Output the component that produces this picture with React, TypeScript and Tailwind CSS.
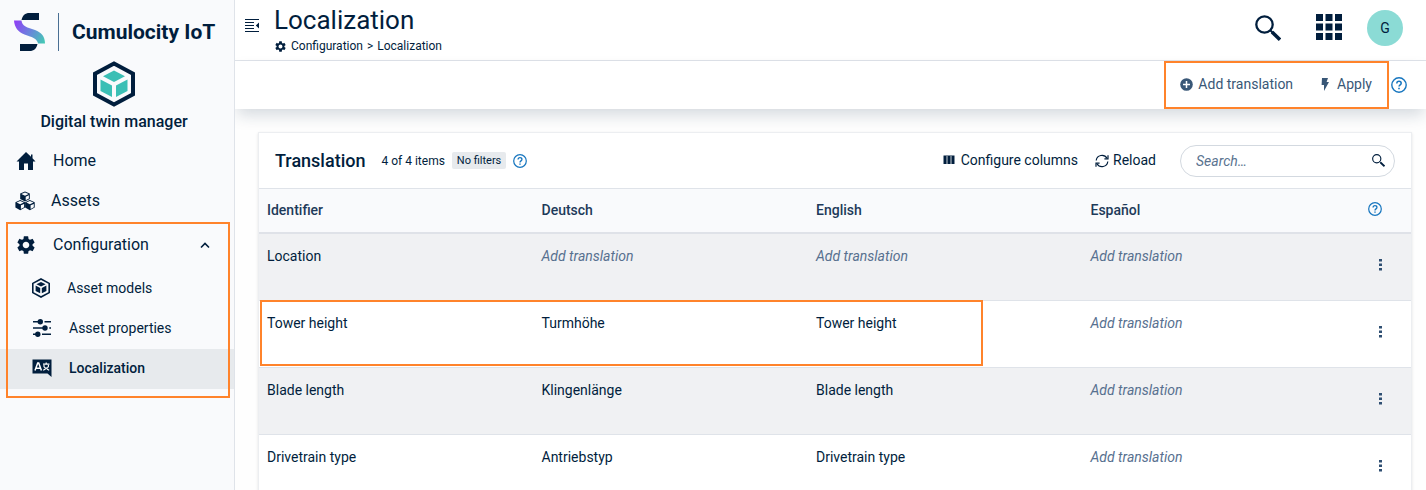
import React from "react";
import { MdSettings } from "react-icons/md";

type IconProps = { className?: string };

function BrandMark() {
  return (
    <svg viewBox="0 0 31 38" className="h-[38px] w-[31px] shrink-0" aria-hidden="true">
      <defs>
        <linearGradient id="brand-ribbon" x1="0" y1="10" x2="31" y2="28" gradientUnits="userSpaceOnUse">
          <stop offset="0" stopColor="#8f3ff5" />
          <stop offset="0.5" stopColor="#6a83dc" />
          <stop offset="1" stopColor="#45c9b5" />
        </linearGradient>
      </defs>
      <path d="M7.500 7C8.500 2.500 11 0 15.500 0H25V7Z" fill="#011e3d" />
      <path d="M23.500 31C22.500 35.500 20 38 15.500 38H6V31Z" fill="#011e3d" />
      <path
        d="M0 7.500H7.500C8 11.500 10.500 13.500 15 15L21 17C27.500 19.500 31 23.500 31 30.500H24C23.500 27 20.500 25 16 23.500L10.500 21.500C4 19 .5 14.500 0 7.500Z"
        fill="url(#brand-ribbon)"
      />
    </svg>
  );
}

function TwinLogo() {
  return (
    <svg viewBox="0 0 44 46" className="h-[46px] w-11" aria-hidden="true">
      <path d="M22 2.500 41 12.800V33.200L22 43.500 3 33.200V12.800Z" fill="none" stroke="#011e3d" strokeWidth="4" />
      <path d="M22 9.500 33 15.200 22 21 11 15.200Z" fill="#3bbfb5" />
      <path d="M8.500 18.500 20 24.500V36L8.500 30Z" fill="#3bbfb5" />
      <path d="M35.500 18.500 24 24.500V36L35.500 30Z" fill="#3bbfb5" />
    </svg>
  );
}

function HomeIcon({ className }: IconProps) {
  return (
    <svg viewBox="0 0 20 20" className={className} fill="currentColor" aria-hidden="true">
      <path d="M10 1 .5 10.500H3V19h5v-6.500h4V19h5v-8.500h2.500L16.500 7.300V3.500H15v2.300Z" />
    </svg>
  );
}

function CubesIcon({ className }: IconProps) {
  const cube = (x: number, y: number) => (
    <g transform={`translate(${x} ${y})`}>
      <path d="M5 0 9.800 2.200V7.600L5 10.200.2 7.600V2.200Z" fill="currentColor" />
      <path d="M5 1 8.600 2.600 5 4.300 1.400 2.600Z" fill="#f9fafc" />
      <path d="M5.700 5.300 8.900 3.900V7.200L5.700 8.900Z" fill="#f9fafc" />
    </g>
  );
  return (
    <svg viewBox="0 0 20 20" className={className} aria-hidden="true">
      {cube(5, 0.4)}
      {cube(0.2, 9)}
      {cube(9.9, 9)}
    </svg>
  );
}

function HexCubeIcon({ className }: IconProps) {
  return (
    <svg viewBox="0 0 20 20" className={className} aria-hidden="true">
      <path d="M10 1 18.200 5.400V14.600L10 19 1.800 14.600V5.400Z" fill="none" stroke="currentColor" strokeWidth="1.600" />
      <path d="M10 4 14.600 6.300 10 8.600 5.400 6.300Z" fill="currentColor" />
      <path d="M4.600 7.600 9.200 10V15.200L4.600 12.900Z" fill="currentColor" />
      <path d="M15.400 7.600 10.800 10V15.200L15.400 12.900Z" fill="currentColor" />
    </svg>
  );
}

function SlidersIcon({ className }: IconProps) {
  return (
    <svg viewBox="0 0 20 20" className={className} fill="currentColor" aria-hidden="true">
      <path d="M1 3h9v1.500H1zM12.500 3H19v1.500h-6.500zM1 9.300h13v1.500H1zM17.300 9.300H19v1.500h-1.700zM1 15.600h5v1.500H1zM10 15.600h9v1.500h-9z" />
      <circle cx="8.300" cy="3.700" r="2.700" />
      <circle cx="13" cy="10" r="2.700" />
      <circle cx="5.800" cy="16.300" r="2.700" />
    </svg>
  );
}

function LanguageIcon({ className }: IconProps) {
  return (
    <svg viewBox="0 0 20 20" className={className} aria-hidden="true">
      <path d="M.5 1.500h19V19l-4-3.500H.5Z" fill="currentColor" />
      <path d="M3 12.500 5.700 5h1l2.700 7.500M4 10.200h4.400" fill="none" stroke="#fff" strokeWidth="1.500" />
      <path d="M11 6.200h6.500M14.200 4.500v1.700M12 7c-.3 2 .5 3 2.200 3s2.500-1 2.200-3M14.200 9.500c-.6 1.500-1.500 2.300-3 2.800M14.200 9.500c.6 1.500 1.500 2.300 3 2.800" fill="none" stroke="#fff" strokeWidth="1.200" />
    </svg>
  );
}

function CollapseIcon({ className }: IconProps) {
  return (
    <svg viewBox="0 0 14 14" className={className} fill="currentColor" aria-hidden="true">
      <path d="M0 0h14v1H0zM0 3h9v1H0zM0 6h9v1H0zM0 9h9v1H0zM0 12h14v1H0zM14 3.600v6L10.800 6.600z" />
    </svg>
  );
}

function SearchIcon({ className }: IconProps) {
  return (
    <svg viewBox="0 0 26 26" className={className} fill="none" stroke="currentColor" aria-hidden="true">
      <circle cx="9.500" cy="9.500" r="8.200" strokeWidth="2.300" />
      <path d="m15 15 2.500 2.500" strokeWidth="2" />
      <path d="m17 17 8 7.700" strokeWidth="3.600" />
    </svg>
  );
}

function GridIcon({ className }: IconProps) {
  return (
    <svg viewBox="0 0 26 26" className={className} fill="currentColor" aria-hidden="true">
      <path d="M0 0h7v7H0zM9.500 0h7v7h-7zM19 0h7v7h-7zM0 9.500h7v7H0zM9.500 9.500h7v7h-7zM19 9.500h7v7h-7zM0 19h7v7H0zM9.500 19h7v7h-7zM19 19h7v7h-7z" />
    </svg>
  );
}

function HelpIcon({ className }: IconProps) {
  return (
    <svg viewBox="0 0 16 16" className={className} fill="none" stroke="currentColor" aria-hidden="true">
      <circle cx="8" cy="8" r="7.200" strokeWidth="1.400" />
      <path d="M5.800 6.400c0-1.300 1-2.200 2.200-2.200s2.200.8 2.200 2c0 1.600-2.200 1.700-2.200 3.400" strokeWidth="1.500" />
      <path d="M8 10.800v1.500" strokeWidth="1.600" />
    </svg>
  );
}

function PlusCircleIcon({ className }: IconProps) {
  return (
    <svg viewBox="0 0 13 13" className={className} aria-hidden="true">
      <circle cx="6.500" cy="6.500" r="6.300" fill="currentColor" />
      <path d="M6.500 3v7M3 6.500h7" stroke="#fff" strokeWidth="1.500" />
    </svg>
  );
}

function BoltIcon({ className }: IconProps) {
  return (
    <svg viewBox="0 0 8 13" className={className} fill="currentColor" aria-hidden="true">
      <path d="M1 0h6L5.600 4H8L3 13V7H.6Z" />
    </svg>
  );
}

function ColumnsIcon({ className }: IconProps) {
  return (
    <svg viewBox="0 0 12 10" className={className} aria-hidden="true">
      <path d="M.5.500h11v8.500H.5z" fill="currentColor" />
      <path d="M4 1v8M8 1v8" stroke="#fff" strokeWidth=".8" />
    </svg>
  );
}

function ReloadIcon({ className }: IconProps) {
  return (
    <svg viewBox="0 0 14 14" className={className} fill="none" stroke="currentColor" strokeWidth="1.200" aria-hidden="true">
      <path d="M1.200 6.500A5.800 5.800 0 0 1 12 4.300M12.800 7.500A5.800 5.800 0 0 1 2 9.700" />
      <path d="M13 1.200v3.600H9.400M1 12.800V9.200h3.600" />
    </svg>
  );
}

function DotsIcon({ className }: IconProps) {
  return (
    <svg viewBox="0 0 3 12" className={className} fill="currentColor" aria-hidden="true">
      <path d="M0 0h3v2.500H0zM0 4.500h3V7H0zM0 9h3v2.500H0z" />
    </svg>
  );
}

const columns = ["Identifier", "Deutsch", "English", "Español"];

const rows: string[][] = [
  ["Location", "", "", ""],
  ["Tower height", "Turmhöhe", "Tower height", ""],
  ["Blade length", "Klingenlänge", "Blade length", ""],
  ["Drivetrain type", "Antriebstyp", "Drivetrain type", ""],
];

function Sidebar() {
  return (
    <aside className="w-[235px] shrink-0 border-r border-[#dfe3e9] bg-[#f9fafc] pt-[13px]">
      <div className="flex items-center pl-3.5">
        <BrandMark />
        <div className="ml-[13px] h-[38px] w-px bg-[#4a6f93]" />
        <span className="ml-[13px] text-[21px] leading-6 font-bold whitespace-nowrap">Cumulocity IoT</span>
      </div>
      <div className="mt-[10px] flex flex-col items-center pr-1.5">
        <TwinLogo />
        <span className="mt-[3px] text-[16px] leading-6 font-medium">Digital twin manager</span>
      </div>
      <nav aria-label="Main" className="mt-[7px]">
        <a href="#home" className="flex h-10 items-center gap-[17px] pl-4 text-[16px]">
          <HomeIcon className="size-5" />
          Home
        </a>
        <a href="#assets" className="flex h-10 items-center gap-4 pl-[15px] text-[16px]">
          <CubesIcon className="size-5" />
          Assets
        </a>
        <div className="relative">
          <button type="button" aria-expanded="true" className="flex h-12 w-full items-center gap-4 pr-6 pl-[15px] text-left text-[16px]">
            <MdSettings className="size-[22px]" />
            <span className="flex-1">Configuration</span>
            <svg viewBox="0 0 10 10" className="size-2.5" fill="none" stroke="currentColor" strokeWidth="1.600" aria-hidden="true">
              <path d="m1 7.500 4-4 4 4" />
            </svg>
          </button>
          <a href="#models" className="flex h-10 items-center gap-4 pb-0.5 pl-[31px] text-[14px]">
            <HexCubeIcon className="size-5" />
            Asset models
          </a>
          <a href="#properties" className="flex h-10 items-center gap-[17px] pb-0.5 pl-8 text-[14px]">
            <SlidersIcon className="size-5" />
            Asset properties
          </a>
          <a href="#localization" aria-current="page" className="flex h-10 items-center gap-[17px] bg-[#e7eaed] pb-0.5 pl-8 text-[14px] font-medium">
            <LanguageIcon className="size-5" />
            Localization
          </a>
          <div className="pointer-events-none absolute top-px right-1 -bottom-[9px] left-1.5 border-2 border-[#ff832b]" />
        </div>
      </nav>
    </aside>
  );
}

function TopBar() {
  return (
    <header className="flex h-[61px] shrink-0 items-center border-b border-[#dfe3e9] bg-white pr-[23px] pl-[10px]">
      <button type="button" aria-label="Collapse navigation" className="-mt-2">
        <CollapseIcon className="size-3.5" />
      </button>
      <div className="ml-[15px] flex-1">
        <h1 className="-mt-0.5 text-[26px] leading-8">Localization</h1>
        <nav aria-label="Breadcrumb" className="mt-0.5 flex items-center text-[12px] leading-4">
          <MdSettings className="mr-1 size-[13px]" />
          <a href="#configuration">Configuration</a>
          <span className="px-1">&gt;</span>
          <a href="#localization">Localization</a>
        </nav>
      </div>
      <button type="button" aria-label="Search" className="mr-[35px] mb-1">
        <SearchIcon className="size-[26px]" />
      </button>
      <button type="button" aria-label="Applications" className="mr-[25px] mb-1.5">
        <GridIcon className="size-[26px]" />
      </button>
      <button type="button" className="mb-1 size-9 rounded-full bg-[#8bdbd5] text-[14px]">
        G
      </button>
    </header>
  );
}

function ActionBar() {
  return (
    <div className="relative z-10 flex h-12 shrink-0 items-center justify-end bg-white pr-[19px] text-[#395777] shadow-[0_8px_16px_-2px_rgba(20,50,80,0.18)]">
      <div className="relative flex h-full items-center gap-7 pr-[17px] pb-0.5 pl-4 text-[14px]">
        <button type="button" className="flex items-center gap-[5px]">
          <PlusCircleIcon className="size-[13px]" />
          Add translation
        </button>
        <button type="button" className="flex items-center gap-2">
          <BoltIcon className="h-[13px] w-2" />
          Apply
        </button>
        <div className="pointer-events-none absolute inset-0 border-2 border-[#ff832b]" />
      </div>
      <button type="button" aria-label="Help" className="ml-[2px] text-[#1776bf]">
        <HelpIcon className="size-4" />
      </button>
    </div>
  );
}

function TranslationCard() {
  return (
    <section className="mt-[23px] mr-3.5 ml-[23px] border border-[#eceef1] bg-white shadow-sm">
      <div className="flex h-14 items-center border-b border-[#dfe3e9] px-4 text-[14px]">
        <h2 className="text-[18px] font-medium">Translation</h2>
        <span className="ml-4 text-[12px]">4 of 4 items</span>
        <span className="ml-[7px] rounded-xs bg-[#e7eaed] px-[5px] text-[11px] leading-[17px]">No filters</span>
        <button type="button" aria-label="Help" className="ml-[7px] text-[#1776bf]">
          <HelpIcon className="size-3.5" />
        </button>
        <button type="button" className="ml-auto flex items-center gap-1.5">
          <ColumnsIcon className="mb-0.5 h-2.5 w-3" />
          Configure columns
        </button>
        <button type="button" className="ml-[17px] flex items-center gap-1">
          <ReloadIcon className="size-3.5" />
          Reload
        </button>
        <label className="ml-6 flex h-8 w-[215px] items-center rounded-full border border-[#d3d9e0] pr-[9px] pl-[15px]">
          <span className="hidden">Search translations</span>
          <input
            type="text"
            aria-label="Search translations"
            placeholder="Search…"
            className="h-full min-w-0 flex-1 bg-transparent leading-6 italic outline-none placeholder:text-[#5a7390]"
          />
          <SearchIcon className="size-[13px] shrink-0" />
        </label>
      </div>
      <div className="relative">
        <table className="w-full table-fixed border-separate border-spacing-0 text-left text-[14px]">
          <thead className="bg-[#f9fafc] text-[#1e3a5a]">
            <tr>
              {columns.map((c) => (
                <th key={c} scope="col" className="h-[45px] border-b-2 border-[#dfe2e8] px-2 font-medium">
                  {c}
                </th>
              ))}
              <th scope="col" className="w-[54px] border-b-2 border-[#dfe2e8] pb-1 pl-[11px] align-middle">
                <button type="button" aria-label="Help" className="block text-[#1776bf]">
                  <HelpIcon className="size-3.5" />
                </button>
              </th>
            </tr>
          </thead>
          <tbody>
            {rows.map((row) => (
              <tr key={row[0]} className="odd:bg-[#f0f1f3]">
                {row.map((cell, i) => (
                  <td key={i} className="h-[67px] border-b border-[#dfe3e9] px-2 pt-3 align-top leading-5">
                    {cell || <span className="text-[#57708f] italic">Add translation</span>}
                  </td>
                ))}
                <td className="border-b border-[#dfe3e9] pt-[25px] pl-[22px] align-top">
                  <button type="button" aria-label={`Actions for ${row[0]}`} className="block text-[#2f4f72]">
                    <DotsIcon className="h-3 w-[3px]" />
                  </button>
                </td>
              </tr>
            ))}
          </tbody>
        </table>
        <div className="pointer-events-none absolute top-[111px] left-px h-[66px] w-[723px] border-2 border-[#ff832b]" />
      </div>
    </section>
  );
}

export default function App() {
  return (
    <div className="flex h-screen overflow-hidden bg-white font-['Roboto','Liberation_Sans',sans-serif] text-[#011e3d]">
      <Sidebar />
      <div className="flex min-w-0 flex-1 flex-col overflow-hidden">
        <TopBar />
        <ActionBar />
        <main className="min-h-0 flex-1 overflow-hidden bg-[#fefefe]">
          <TranslationCard />
        </main>
      </div>
    </div>
  );
}
